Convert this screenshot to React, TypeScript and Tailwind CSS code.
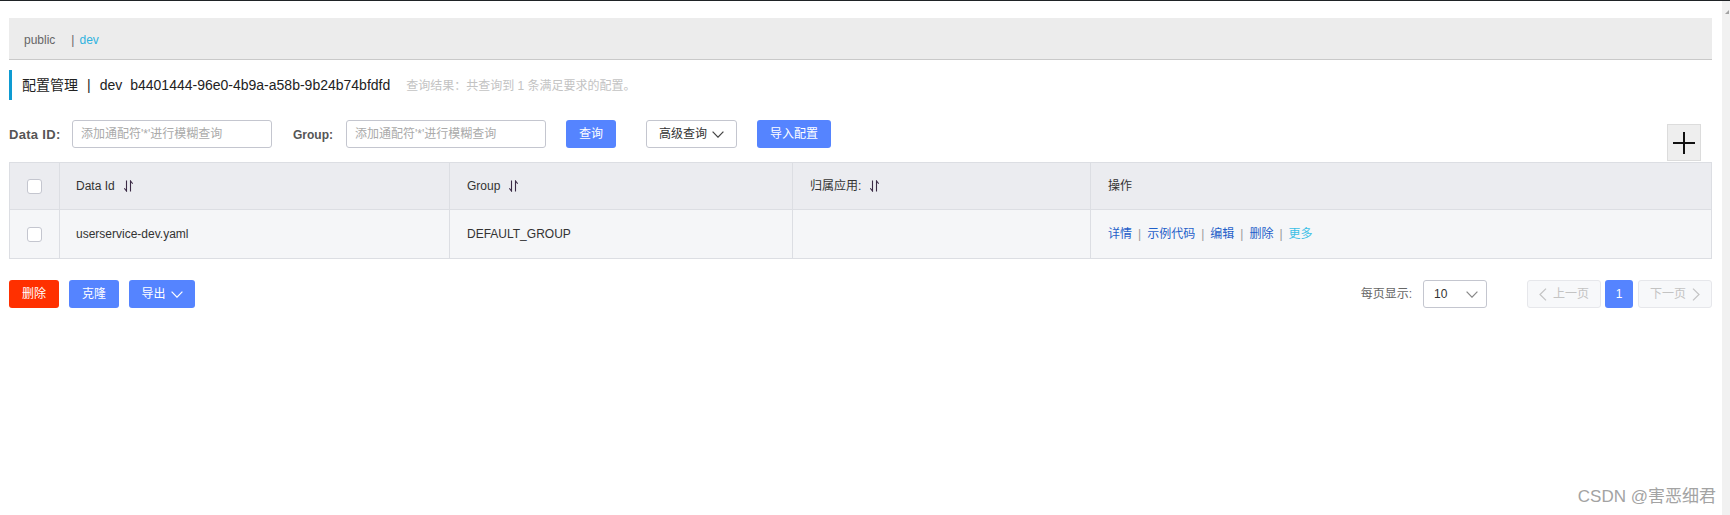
import React from "react";

const FONT = { fontFamily: '"Liberation Sans", "Noto Sans CJK SC", sans-serif' };

function SortIcon() {
  return (
    <svg width="9" height="12" viewBox="0 0 9 12" className="ml-[9px] shrink-0">
      <path d="M2.5 0.5 V11 L0.3 8.3" fill="none" stroke="#3b2a45" strokeWidth="1.1" />
      <path d="M6.5 11.5 V1 L8.7 3.7" fill="none" stroke="#3b2a45" strokeWidth="1.1" />
    </svg>
  );
}

function Chevron({ color = "#333", w = 12, h = 7 }: { color?: string; w?: number; h?: number }) {
  return (
    <svg width={w} height={h} viewBox="0 0 12 7" className="shrink-0">
      <polyline points="0.6,0.6 6,6.2 11.4,0.6" fill="none" stroke={color} strokeWidth="1.2" />
    </svg>
  );
}

function Checkbox() {
  return <div className="w-[15px] h-[15px] rounded-[3px] border border-[#c4c6cf] bg-white" />;
}

function Sep() {
  return <span className="mx-[6px] text-[#9a9a9a]">|</span>;
}

export default function App() {
  return (
    <div className="relative w-[1730px] h-[515px] bg-white overflow-hidden flex flex-col" style={FONT}>
      <div className="h-px bg-[#1f2326] shrink-0" />
      <div className="flex flex-1 min-h-0">
        <div className="flex-1 pl-[9px] pr-[10px] flex flex-col">
          {/* namespace bar */}
          <div className="mt-[17px] h-[42px] bg-[#ececec] border-b border-[#c9c9c9] flex items-center pl-[15px] pt-[2px] text-[12px] text-[#666]">
            <span className="mr-[16px]">public</span>
            <span className="text-[#666]">|</span>
            <span className="ml-[5px] text-[#2fb3df]">dev</span>
          </div>

          {/* title */}
          <div className="mt-[10px] h-[30px] border-l-[3px] border-[#0e9bd2] flex items-center pl-[10px] pt-[1px]">
            <span className="text-[14px] text-[#222]">配置管理</span>
            <span className="text-[14px] text-[#222] mx-[9px]">|</span>
            <span className="text-[14px] text-[#222]">dev</span>
            <span className="text-[14px] text-[#222] ml-[8px]">b4401444-96e0-4b9a-a58b-9b24b74bfdfd</span>
            <span className="text-[12px] text-[#c3c3c3] ml-[16px]">查询结果：共查询到 1 条满足要求的配置。</span>
          </div>

          {/* form row */}
          <div className="mt-[20px] flex items-start">
            <div className="w-[63px] h-[28px] flex items-center text-[13px] tracking-[0.3px] font-bold text-[#555] pt-[1px]">Data ID:</div>
            <div className="w-[200px] h-[28px] border border-[#c4c6cf] rounded-[3px] flex items-center px-[8px] text-[12px] text-[#aaa]">
              添加通配符'*'进行模糊查询
            </div>
            <div className="ml-[21px] w-[53px] h-[28px] flex items-center text-[12px] font-bold text-[#555] pt-[1px]">Group:</div>
            <div className="w-[200px] h-[28px] border border-[#c4c6cf] rounded-[3px] flex items-center px-[8px] text-[12px] text-[#aaa]">
              添加通配符'*'进行模糊查询
            </div>
            <div className="ml-[20px] w-[50px] h-[28px] rounded-[3px] bg-[#5584ff] text-white text-[12px] flex items-center justify-center">
              查询
            </div>
            <div className="ml-[30px] w-[91px] h-[28px] rounded-[3px] border border-[#c4c6cf] bg-white text-[#333] text-[12px] flex items-center justify-center gap-[5px]">
              <span>高级查询</span>
              <Chevron color="#444" />
            </div>
            <div className="ml-[20px] w-[74px] h-[28px] rounded-[3px] bg-[#5584ff] text-white text-[12px] flex items-center justify-center">
              导入配置
            </div>
            <div className="ml-auto mr-[11px] mt-[4px] w-[34px] h-[37px] bg-[#eeeeee] border border-[#dcdcdc] flex items-center justify-center">
              <svg width="22" height="22" viewBox="0 0 22 22">
                <path d="M11 0 V22 M0 11 H22" stroke="#111" strokeWidth="2" />
              </svg>
            </div>
          </div>

          {/* table */}
          <div className="mt-px border border-[#dcdee3] text-[12px] text-[#333]">
            <div className="grid grid-cols-[50px_390px_343px_298px_1fr] h-[47px] bg-[#ebecf0] border-b border-[#dcdee3]">
              <div className="flex items-center justify-center border-r border-[#dcdee3]"><Checkbox /></div>
              <div className="flex items-center pl-[16px] border-r border-[#dcdee3]">Data Id<SortIcon /></div>
              <div className="flex items-center pl-[17px] border-r border-[#dcdee3]">Group<SortIcon /></div>
              <div className="flex items-center pl-[17px] border-r border-[#dcdee3]">归属应用:<SortIcon /></div>
              <div className="flex items-center pl-[17px]">操作</div>
            </div>
            <div className="grid grid-cols-[50px_390px_343px_298px_1fr] h-[48px] bg-[#f5f6f8]">
              <div className="flex items-center justify-center border-r border-[#dcdee3]"><Checkbox /></div>
              <div className="flex items-center pl-[16px] border-r border-[#dcdee3]">userservice-dev.yaml</div>
              <div className="flex items-center pl-[17px] border-r border-[#dcdee3]">DEFAULT_GROUP</div>
              <div className="flex items-center pl-[17px] border-r border-[#dcdee3]"></div>
              <div className="flex items-center pl-[17px] text-[#1f5fc9]">
                <span>详情</span><Sep />
                <span>示例代码</span><Sep />
                <span>编辑</span><Sep />
                <span>删除</span><Sep />
                <span className="text-[#3cc0e6]">更多</span>
              </div>
            </div>
          </div>

          {/* bottom bar */}
          <div className="mt-[21px] flex items-center h-[28px] text-[12px]">
            <div className="w-[50px] h-[28px] rounded-[3px] bg-[#ff3000] text-white flex items-center justify-center">删除</div>
            <div className="ml-[10px] w-[50px] h-[28px] rounded-[3px] bg-[#5584ff] text-white flex items-center justify-center">克隆</div>
            <div className="ml-[10px] w-[66px] h-[28px] rounded-[3px] bg-[#5584ff] text-white flex items-center justify-center gap-[5px]">
              <span>导出</span>
              <Chevron color="#fff" />
            </div>
            <div className="ml-auto text-[#666] mr-[11px]">每页显示:</div>
            <div className="w-[64px] h-[28px] rounded-[3px] border border-[#c4c6cf] flex items-center pl-[10px] pr-[8px] text-[#333]">
              <span className="flex-1">10</span>
              <Chevron color="#888" />
            </div>
            <div className="ml-[40px] w-[74px] h-[28px] rounded-[3px] border border-[#e6e7eb] bg-[#f7f8fa] text-[#c3c3c3] flex items-center justify-center gap-[6px]">
              <svg width="8" height="13" viewBox="0 0 8 13"><polyline points="7,0.6 1,6.5 7,12.4" fill="none" stroke="#c3c3c3" strokeWidth="1.2" /></svg>
              <span>上一页</span>
            </div>
            <div className="ml-[4px] w-[28px] h-[28px] rounded-[3px] bg-[#5584ff] text-white flex items-center justify-center">1</div>
            <div className="ml-[5px] w-[74px] h-[28px] rounded-[3px] border border-[#e6e7eb] bg-[#f7f8fa] text-[#c3c3c3] flex items-center justify-center gap-[6px]">
              <span>下一页</span>
              <svg width="8" height="13" viewBox="0 0 8 13"><polyline points="1,0.6 7,6.5 1,12.4" fill="none" stroke="#c3c3c3" strokeWidth="1.2" /></svg>
            </div>
          </div>
        </div>

        {/* scrollbar */}
        <div className="w-[8px] bg-[#f1f1f1] relative">
          <svg width="4" height="4" viewBox="0 0 4 4" className="absolute top-[9px] right-[1px]">
            <polygon points="0,4 4,4 4,0" fill="#a3a3a3" />
          </svg>
        </div>
      </div>

      <div className="absolute right-[14px] bottom-[6px] text-[17px] text-[#a3a3a3]" style={FONT}>CSDN @害恶细君</div>
    </div>
  );
}
